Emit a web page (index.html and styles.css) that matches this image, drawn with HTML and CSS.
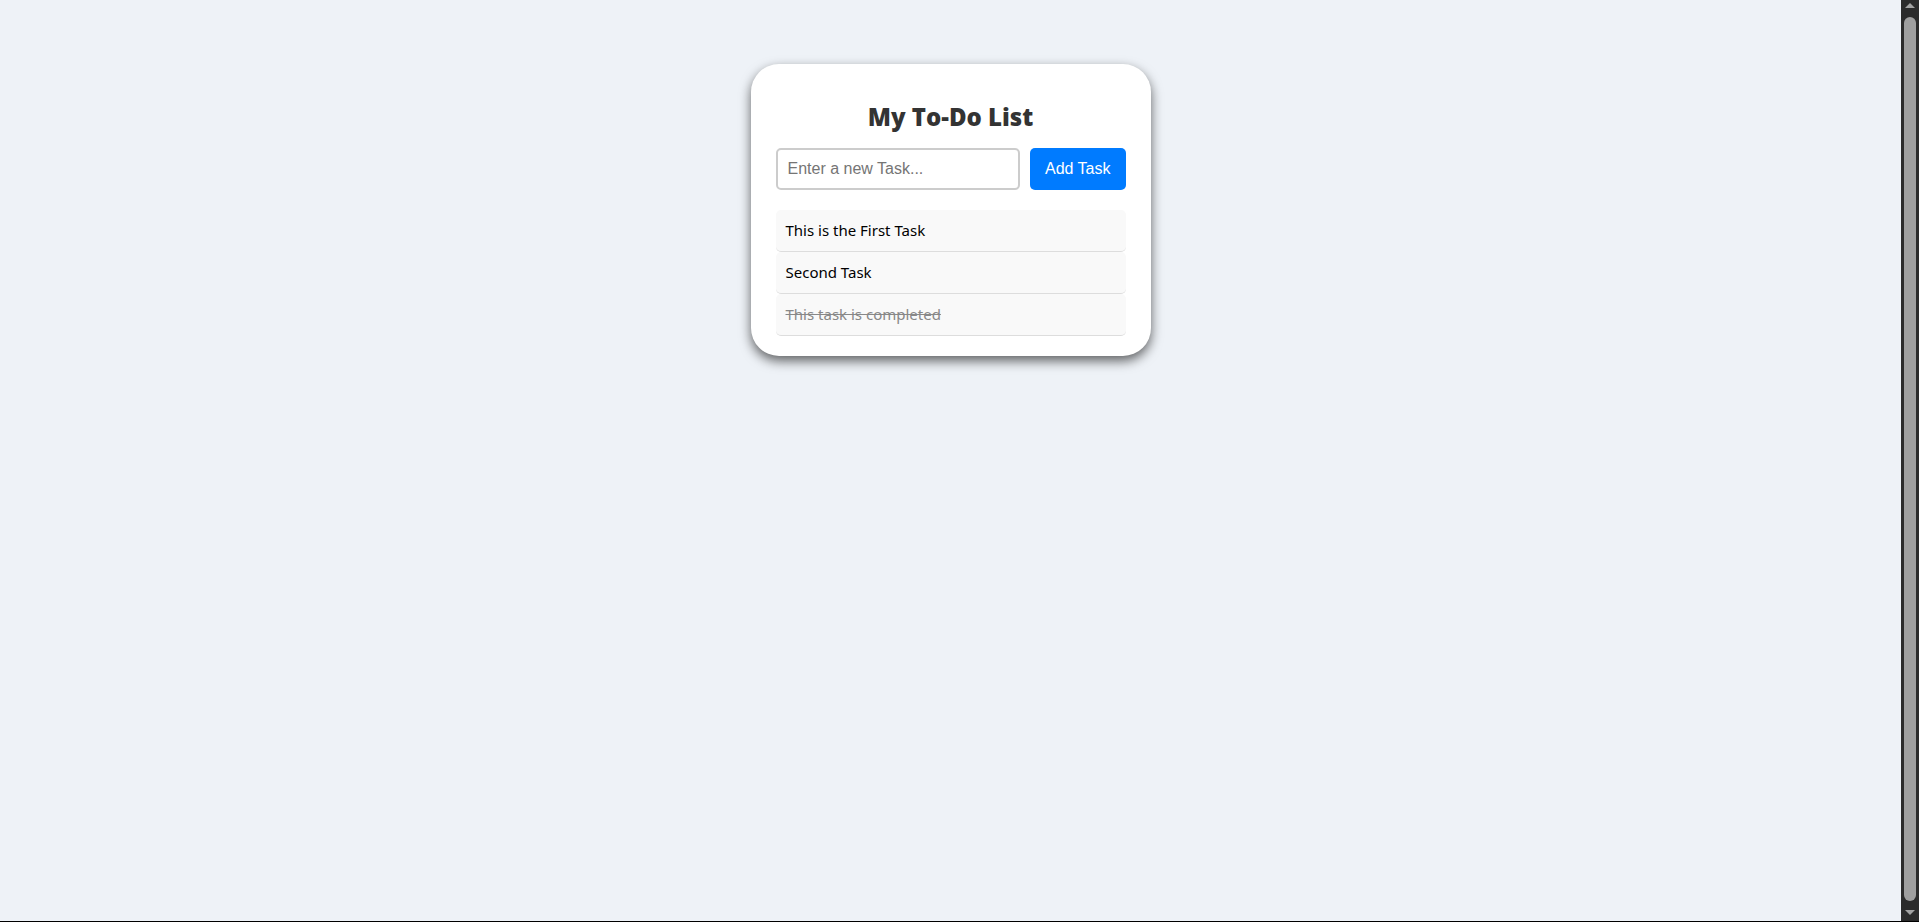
FILE: index.html
```html
<!DOCTYPE html>
<html lang="en">
<head>
<meta charset="utf-8">
<title>My To-Do List</title>
<link rel="stylesheet" href="styles.css">
</head>
<body>
  <main class="card">
    <h2 class="title">My To-Do List</h2>
    <div class="add-row">
      <input class="task-input" type="text" placeholder="Enter a new Task...">
      <button class="add-btn" type="button">Add Task</button>
    </div>
    <ul class="task-list">
      <li class="task">This is the First Task</li>
      <li class="task">Second Task</li>
      <li class="task done">This task is completed</li>
    </ul>
  </main>
  <div class="scrollbar" aria-hidden="true">
    <svg class="sb-arrow" width="12" height="8" viewBox="0 0 12 8"><path d="M1 7 L6 2 L11 7 Z" fill="#a3a3a3"/></svg>
    <div class="sb-thumb"></div>
    <svg class="sb-arrow" width="12" height="8" viewBox="0 0 12 8"><path d="M1 1 L11 1 L6 6 Z" fill="#a3a3a3"/></svg>
  </div>
  <div class="bottom-edge" aria-hidden="true"></div>
</body>
</html>
```

FILE: styles.css
```css
html {
  height: 100%;
}

body {
  margin: 0;
  min-height: 100%;
  background: #eef2f7;
  display: flex;
  justify-content: center;
  align-items: flex-start;
  padding: 64px 18px 0 0;
  box-sizing: border-box;
  font-family: "Noto Sans", "Open Sans", sans-serif;
}

.card {
  width: 400px;
  box-sizing: border-box;
  background: #ffffff;
  border-radius: 28px;
  padding: 37px 25px 20px;
  box-shadow: 0 5px 12px rgba(0, 0, 0, 0.6);
}

.title {
  margin: 0 0 15px;
  text-align: center;
  font-family: "Open Sans", "Noto Sans", sans-serif;
  font-weight: 800;
  font-size: 24px;
  line-height: 32px;
  color: #333333;
}

.add-row {
  display: flex;
  gap: 10px;
}

.task-input {
  flex: 1;
  min-width: 0;
  padding: 10px;
  border: 2px solid #cccccc;
  border-radius: 5px;
  font-family: "Liberation Sans", Arial, sans-serif;
  font-size: 16px;
  line-height: 18px;
  color: #333;
  outline: none;
}

.task-input::placeholder {
  color: #757575;
}

.add-btn {
  padding: 0 15px;
  border: none;
  border-radius: 5px;
  background: #007bff;
  color: #ffffff;
  font-family: "Liberation Sans", Arial, sans-serif;
  font-size: 16px;
  cursor: pointer;
}

.task-list {
  list-style: none;
  margin: 20px 0 0;
  padding: 0;
}

.task {
  padding: 10px;
  background: #f9f9f9;
  border-bottom: 1px solid #dddddd;
  border-radius: 5px;
  font-size: 15px;
  line-height: 21px;
  color: #000000;
}

.task.done {
  color: #888888;
  text-decoration: line-through;
}

.scrollbar {
  position: fixed;
  top: 0;
  right: 0;
  bottom: 1px;
  width: 18px;
  background: #2b2b2b;
  display: flex;
  flex-direction: column;
  align-items: center;
  padding: 1px 0 4px;
  box-sizing: border-box;
  gap: 8px;
}

.sb-arrow {
  flex: none;
  display: block;
}

.sb-thumb {
  flex: 1;
  width: 12px;
  background: #9f9f9f;
  border-radius: 6px;
}

.bottom-edge {
  position: fixed;
  left: 0;
  right: 0;
  bottom: 0;
  height: 1px;
  background: #000000;
}
```
